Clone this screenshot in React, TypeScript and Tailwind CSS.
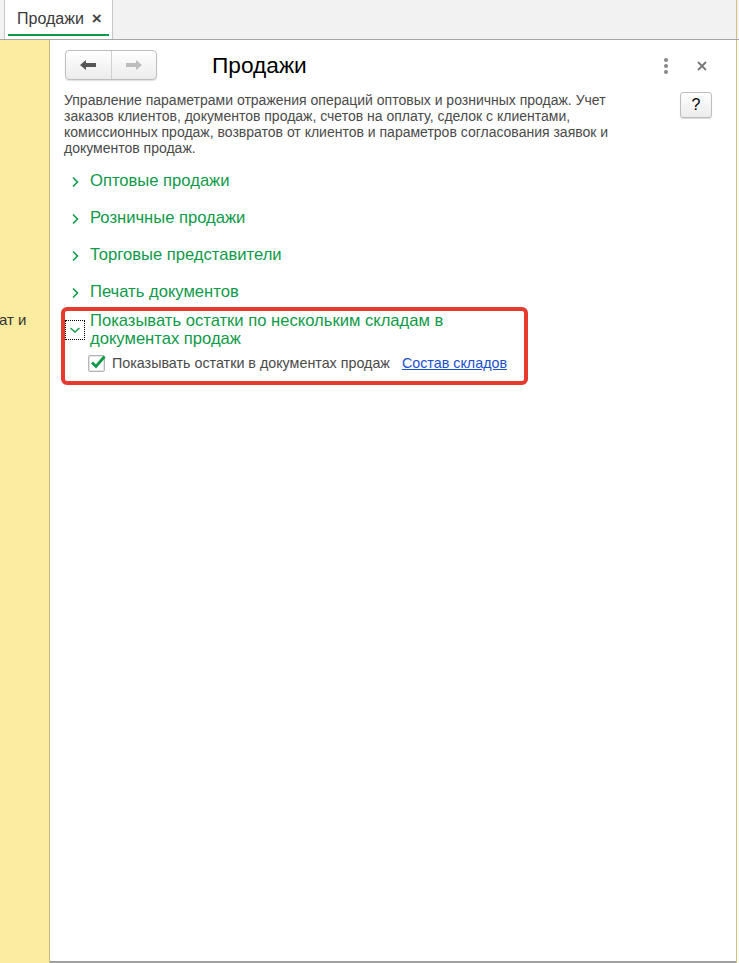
import React from 'react';

const font = { fontFamily: '"Liberation Sans", Arial, "Noto Sans", sans-serif' };

const sections = ['Оптовые продажи', 'Розничные продажи', 'Торговые представители', 'Печать документов'];

const ChevronRight = () => (
  <svg width="9" height="12" viewBox="0 0 9 12" className="shrink-0">
    <path d="M2 1.5 L6.5 6 L2 10.5" fill="none" stroke="#0e9a48" strokeWidth="1.6" />
  </svg>
);

export default function App() {
  return (
    <div className="w-[739px] h-[963px] flex flex-col bg-white overflow-hidden text-[#333]" style={font}>
      {/* tab bar */}
      <div className="h-[40px] shrink-0 flex bg-[#f2f2f2] border-b border-[#a6a6a6]">
        <div className="ml-[4px] w-[109px] bg-white border-x border-[#c8c8c8] flex flex-col">
          <div className="flex-1 flex items-center pl-[12px] gap-[8px] pt-[3px]">
            <span className="text-[16px] text-[#3a3a3a]">Продажи</span>
            <span className="text-[17px] font-bold text-[#444] leading-none">×</span>
          </div>
          <div className="h-[2px] mx-[3px] mb-[3px] bg-[#0e9a48]" />
        </div>
        <div className="flex-1" />
        <div className="w-[1px] bg-[#d4c27a] mr-[2px]" />
      </div>

      {/* body */}
      <div className="flex-1 flex min-h-0">
        <div className="w-[50px] shrink-0 bg-[#fcec9f] border-r border-[#c9bd7c] flex flex-col">
          <div className="h-[269px]" />
          <span className="text-[15px] text-[#333] -ml-[1px]">ат и</span>
        </div>

        <div className="flex-1 flex flex-col border-r border-[#d4c27a] mr-[2px]">
          <div className="flex-1 flex flex-col pl-[14px] pr-[24px] pt-[10px]">
            {/* header */}
            <div className="flex items-center h-[30px]">
              <div className="ml-[1px] flex w-[92px] h-[30px] rounded-[4px] border border-[#bdbdbd] bg-gradient-to-b from-white to-[#ececec] shadow-[0_1px_1px_rgba(0,0,0,0.12)]">
                <div className="flex-1 flex items-center justify-center border-r border-[#d0d0d0]">
                  <svg width="18" height="12" viewBox="0 0 18 12">
                    <path d="M1 6 L7 1 V4 H17 V8 H7 V11 Z" fill="#555" />
                  </svg>
                </div>
                <div className="flex-1 flex items-center justify-center">
                  <svg width="18" height="12" viewBox="0 0 18 12">
                    <path d="M17 6 L11 1 V4 H1 V8 H11 V11 Z" fill="#bdbdbd" />
                  </svg>
                </div>
              </div>
              <h1 className="ml-[55px] text-[22.7px] text-black leading-none pt-[1px]">Продажи</h1>
              <div className="flex-1" />
              <div className="flex flex-col gap-[2px] mr-[29px] mt-[1px]">
                <span className="w-[4px] h-[4px] rounded-full bg-[#888]" />
                <span className="w-[4px] h-[4px] rounded-full bg-[#888]" />
                <span className="w-[4px] h-[4px] rounded-full bg-[#888]" />
              </div>
              <svg width="10" height="10" viewBox="0 0 10 10" className="mr-[5px] mt-[2px]">
                <path d="M1 1 L9 9 M9 1 L1 9" stroke="#777" strokeWidth="1.8" />
              </svg>
            </div>

            {/* description */}
            <div className="flex items-start mt-[12px]">
              <p className="w-[575px] text-[14px] leading-[16px] text-[#4a4a4a]">
                Управление параметрами отражения операций оптовых и розничных продаж. Учет заказов клиентов, документов продаж, счетов на оплату, сделок с клиентами, комиссионных продаж, возвратов от клиентов и параметров согласования заявок и документов продаж.
              </p>
              <div className="flex-1" />
              <button className="w-[32px] h-[26px] rounded-[3px] border border-[#bdbdbd] bg-gradient-to-b from-white to-[#ececec] shadow-[0_1px_1px_rgba(0,0,0,0.15)] text-[16px] text-black flex items-center justify-center">
                ?
              </button>
            </div>

            {/* sections */}
            <div className="flex flex-col mt-[7px] pl-[7px]">
              {sections.map((s) => (
                <div key={s} className="h-[37px] flex items-center gap-[10px]">
                  <ChevronRight />
                  <span className="text-[16.6px] text-[#0e9a48]">{s}</span>
                </div>
              ))}
            </div>

            {/* highlighted group */}
            <div className="w-[467px] -ml-[3px] -mt-[4px] rounded-[6px] border-[4px] border-[#e63a2e] pt-[1px] pb-[7px]">
              <div className="flex items-start gap-[5px]">
                <div className="w-[20px] h-[20px] mt-[8px] border border-dotted border-black flex items-center justify-center">
                  <svg width="12" height="8" viewBox="0 0 12 8">
                    <path d="M1.5 2 L6 6 L10.5 2" fill="none" stroke="#0e9a48" strokeWidth="1.4" />
                  </svg>
                </div>
                <div className="text-[16.6px] leading-[18px] text-[#0e9a48]">
                  Показывать остатки по нескольким складам в<br />документах продаж
                </div>
              </div>
              <div className="flex items-center mt-[5px] pl-[23px]">
                <div className="relative w-[17px] h-[17px] border border-[#b5b5b5] rounded-[2px] bg-white shadow-[inset_0_0_0_1px_#e6e6e6]">
                  <svg width="18" height="18" viewBox="0 0 18 18" className="absolute left-[0px] top-[-3px]">
                    <path d="M3 9.5 L7 13.5 L15.5 3.5" fill="none" stroke="#0e9a48" strokeWidth="2.8" />
                  </svg>
                </div>
                <span className="ml-[7px] text-[14.3px] text-[#4a4a4a]">Показывать остатки в документах продаж</span>
                <span className="ml-[12px] text-[14.3px] text-[#1a4fd0] underline">Состав складов</span>
              </div>
            </div>
          </div>
          <div className="h-[2px] bg-[#a0a0a0]" />
        </div>
      </div>
    </div>
  );
}
